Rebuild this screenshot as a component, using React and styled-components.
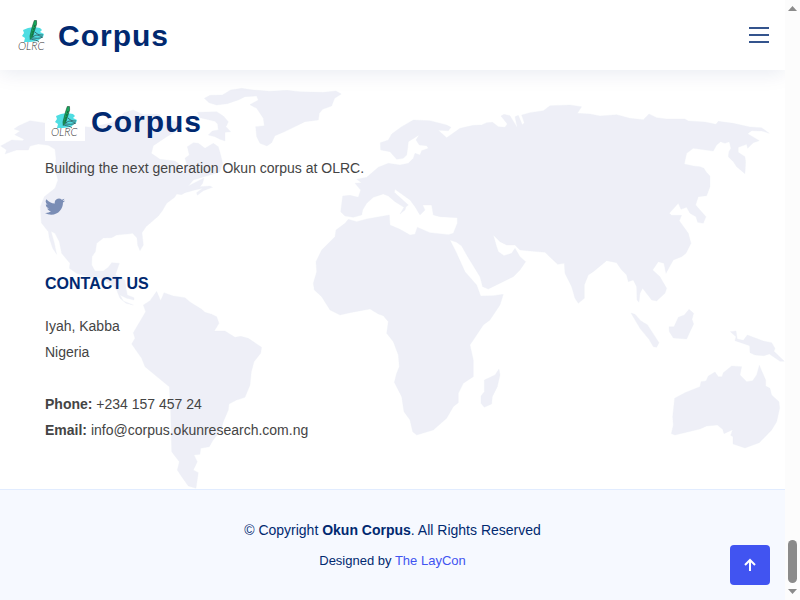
import React from "react";
import styled, { createGlobalStyle } from "styled-components";

const GlobalStyle = createGlobalStyle`
  * { box-sizing: border-box; }
  body {
    margin: 0;
    background: #fff;
    color: #444;
    font-family: "Liberation Sans", Arial, sans-serif;
    font-size: 14px;
  }
`;

const Page = styled.div`
  position: relative;
  display: flex;
  min-height: 100vh;
`;

const Content = styled.div`
  flex: 1;
  min-width: 0;
  display: flex;
  flex-direction: column;
`;

const Header = styled.header`
  position: relative;
  z-index: 1;
  display: flex;
  align-items: center;
  justify-content: space-between;
  padding: 15px 12px;
  background: #fff;
  box-shadow: 0 2px 20px rgba(1, 41, 112, 0.1);
`;

const Brand = styled.a`
  display: flex;
  align-items: center;
  gap: 6px;
  color: #012970;
  text-decoration: none;
`;

const BrandName = styled.span`
  font-size: 30px;
  font-weight: 700;
  line-height: 36px;
  letter-spacing: 1px;
  padding-top: 2px;
`;

const LogoDrawing = styled.svg`
  display: block;
  width: 40px;
  height: 40px;
  background: #fff;
`;

const LogoLetters = styled.text`
  font: italic 300 11px Lato, "Liberation Sans", sans-serif;
  fill: #333;
`;

const MenuButton = styled.button`
  display: flex;
  padding: 0;
  border: 0;
  background: none;
  color: #34548d;
  cursor: pointer;
`;

const FooterTop = styled.section`
  display: grid;
  border-bottom: 1px solid #e1ecff;
`;

const WorldMap = styled.svg`
  grid-area: 1 / 1;
  width: 100%;
  height: 100%;
  fill: #eeeff7;
  stroke: #eeeff7;
  stroke-width: 1px;
  stroke-linejoin: round;
`;

const Details = styled.div`
  grid-area: 1 / 1;
  position: relative;
  display: flex;
  flex-direction: column;
  align-items: flex-start;
  padding: 31px 45px 45px;
`;

const Tagline = styled.p`
  margin: 15px 0 0;
  line-height: 24px;
`;

const SocialLink = styled.a`
  display: flex;
  margin-top: 16px;
  color: #7a8db5;
`;

const Heading = styled.h4`
  margin: 58px 0 19px;
  color: #012970;
  font-size: 16px;
  line-height: 20px;
  text-transform: uppercase;
`;

const Address = styled.address`
  font-style: normal;
  line-height: 26px;
`;

const FooterBottom = styled.footer`
  flex: 1;
  padding: 30px 24px;
  background: #f6f9ff;
  color: #012970;
  text-align: center;
`;

const Copyright = styled.div`
  line-height: 21px;
`;

const Credits = styled.div`
  margin-top: 10px;
  font-size: 13px;
  line-height: 20px;

  a {
    color: #4154f1;
    text-decoration: none;
  }
`;

const BackToTop = styled.a`
  position: fixed;
  right: 30px;
  bottom: 15px;
  display: flex;
  align-items: center;
  justify-content: center;
  width: 40px;
  height: 40px;
  border-radius: 4px;
  background: #4154f1;
  color: #fff;
`;

const ScrollTrack = styled.div`
  position: relative;
  z-index: 2;
  display: flex;
  flex-direction: column;
  align-items: center;
  width: 15px;
  padding: 6px 0 7px;
  background: #fcfcfc;
`;

const ScrollThumb = styled.div`
  width: 9px;
  height: 43px;
  margin: auto 0 6px;
  border-radius: 5px;
  background: #8b8b8b;
`;

const ScrollArrow = styled.svg`
  display: block;
  width: 9px;
  height: 5px;
  fill: #8b8b8b;
`;

function Logo() {
  return (
    <LogoDrawing viewBox="0 0 40 40" aria-hidden="true">
      <path d="M11 15 16 13 22 12 28 13 30 15 28 17 32 19 31 22 28 24 26 26 18 27 12 27 13 23 10 21 12 18Z" fill="#4fdde2" />
      <path d="M23 17c3 3 5 3 8 3M21 22c3-3 5-2 9 0M20 23c4 0 7 1 11-1M19 24c3 1 6 1 8 3" fill="none" stroke="#2d5357" strokeWidth=".8" />
      <path d="M22.3 5.5 24.5 5.5 24.6 9 20.5 22 18.3 24.5 18 21 20.5 11Z" fill="#13a75b" stroke="#17492f" strokeWidth=".6" />
      <path d="M23 10 19.5 22" stroke="#153c27" strokeWidth=".7" strokeDasharray="2 1" />
      <LogoLetters x="6" y="35">OLRC</LogoLetters>
    </LogoDrawing>
  );
}

function CorpusBrand() {
  return (
    <Brand href="#">
      <Logo />
      <BrandName>Corpus</BrandName>
    </Brand>
  );
}

function MapBackground() {
  return (
    <WorldMap viewBox="0 70 785 419" preserveAspectRatio="xMaxYMid meet" aria-hidden="true">
      {/* North America */}
      <g transform="translate(0 80) scale(.3333)">
        <path d="M2 198 35 180 68 182 72 178 44 164 60 153 42 147 55 138 90 122 130 128 170 137 210 135 270 142 330 130 355 120 372 98 400 90 430 104 465 102 482 105 470 120 520 122 545 135 535 150 500 170 460 197 454 220 480 238 525 243 535 250 542 275 555 278 560 250 555 235 568 225 562 200 580 188 595 190 615 205 640 190 655 200 662 225 668 250 660 275 630 285 580 300 565 318 590 305 612 294 608 310 600 320 630 318 638 322 610 332 592 346 590 338 608 325 585 330 555 338 545 344 530 342 524 352 500 370 487 392 475 408 438 440 426 458 430 495 420 512 413 495 411 474 398 460 383 462 370 463 350 465 335 473 310 474 290 490 286 515 276 530 275 555 285 573 310 573 325 562 335 548 358 550 353 565 346 585 375 600 378 625 382 645 402 653 402 660 380 655 360 645 370 663 400 675 378 670 360 655 350 630 330 610 300 595 270 592 230 580 208 565 210 550 185 520 178 485 165 460 153 454 162 485 170 523 158 505 148 475 145 455 124 428 121 380 133 350 165 325 174 300 166 270 168 235 165 208 145 196 115 192 90 198 85 210 50 210 15 222 20 210Z" />
        <path d="M592 97 650 95 670 108 685 125 678 140 692 155 675 157 675 183 660 178 645 170 625 165 637 153 655 150 653 132 645 124 600 113Z" />
      </g>
      {/* Greenland and the Arctic islands */}
      <g transform="translate(140 80) scale(.3333)">
        <path d="M193 55 210 46 247 45 272 30 305 25 340 30 390 34 440 31 480 35 550 37 588 33 604 42 584 55 575 78 548 88 538 100 535 120 495 125 430 157 405 167 395 188 381 198 360 190 350 170 347 140 373 137 370 115 350 85 330 74 355 60 350 48 315 50 295 60 262 71 230 75 207 68Z" />
      </g>
      {/* South America */}
      <g transform="translate(110 270) scale(.3333)">
        <path d="M140 64 152 92 162 68 190 78 225 83 240 96 275 118 285 127 305 133 320 140 327 160 313 183 345 183 375 202 392 199 415 205 455 232 452 250 432 275 424 305 420 345 405 382 380 390 357 402 355 420 340 455 333 480 308 512 298 530 272 535 270 553 252 555 262 575 250 600 265 608 258 655 235 648 215 620 202 600 208 575 185 545 182 420 178 350 165 340 105 290 95 265 65 222 75 205 70 188 107 125 100 105 120 92Z" />
      </g>
      {/* Europe, Asia, Africa and Madagascar */}
      <g transform="translate(300 90) scale(.3333)">
        <path d="M241 158 265 150 275 132 305 110 340 90 390 92 440 105 453 112 445 122 415 121 440 143 480 115 520 106 545 105 560 98 578 97 595 110 615 112 622 102 603 78 612 73 630 77 652 113 645 80 655 76 667 104 673 98 665 75 690 68 730 62 750 47 810 45 845 50 832 70 870 72 900 78 950 74 990 85 1030 89 1047 72 1070 83 1100 87 1155 87 1165 93 1215 96 1248 103 1255 94 1300 100 1350 111 1385 113 1408 130 1385 123 1355 122 1343 131 1378 152 1360 158 1343 175 1340 163 1315 172 1315 187 1335 200 1337 215 1335 251 1310 230 1300 215 1285 200 1287 185 1293 175 1288 155 1275 160 1262 155 1250 165 1240 183 1180 175 1160 190 1153 222 1180 228 1200 230 1212 235 1218 245 1230 258 1230 290 1220 317 1195 320 1187 345 1218 380 1210 400 1193 397 1188 380 1170 370 1160 352 1143 358 1135 340 1108 370 1115 376 1145 376 1138 392 1165 430 1173 460 1158 490 1145 500 1120 510 1098 550 1092 520 1075 515 1058 540 1080 560 1100 595 1095 610 1070 633 1055 630 1028 595 1020 610 1017 637 1011 630 1010 590 1000 570 985 575 980 555 965 540 950 518 920 512 880 545 865 555 853 585 853 625 835 640 825 625 815 590 795 550 793 520 773 523 735 487 690 483 660 480 645 465 620 465 600 455 580 435 590 470 595 485 612 497 635 490 645 475 660 500 677 515 660 540 640 560 600 580 565 597 548 590 540 560 500 495 485 468 470 457 450 450 470 490 495 545 530 585 542 618 580 617 610 613 600 645 570 690 550 705 510 765 520 810 520 860 490 880 475 910 475 938 460 950 440 985 400 1020 350 1035 338 1025 330 990 312 965 305 920 283 877 290 850 298 830 295 795 280 755 260 730 265 695 250 677 235 672 210 657 150 668 120 675 90 660 65 620 43 600 40 580 50 545 48 515 65 480 105 440 108 420 135 400 145 388 170 395 200 387 268 375 270 405 300 418 330 435 345 433 352 412 390 428 445 434 460 430 472 400 472 383 420 380 400 375 395 345 368 345 375 360 360 375 345 350 330 330 285 298 283 307 325 345 318 350 315 360 300 372 312 352 285 335 265 318 250 312 220 322 200 340 188 360 185 375 160 382 135 378 122 365 128 318 150 316 175 322 182 300 165 280 185 278 170 268 200 262 235 232 265 220 300 225 325 220 340 205 345 190 360 195 365 182 385 175 380 167 358 165 348 150 357 135 325 155 323 175 320 195 310 205 290 208 270 185 242 180Z" />
        <path d="M597 837 600 855 592 890 577 920 575 942 553 952 543 940 543 918 553 905 553 870 585 855Z" />
      </g>
      {/* Indonesia, New Guinea and Australia */}
      <g transform="translate(600 280) scale(.3333)">
        <path d="M93 99 105 103 122 122 142 134 177 188 170 202 160 200 147 178 120 145Z" />
        <path d="M207 140 222 140 235 112 253 105 267 88 281 100 276 118 281 132 270 155 260 177 220 174 208 155Z" />
        <path d="M391 155 408 153 412 177 430 181 442 165 490 183 515 188 525 205 522 214 553 244 540 244 508 222 492 227 465 225 450 218 449 197 405 182 408 170Z" />
        <path d="M478 256 497 300 497 318 510 325 515 345 537 365 539 385 530 425 515 450 478 488 435 504 415 497 399 492 399 470 392 466 398 449 372 461 368 448 352 435 320 438 300 447 225 465 214 461 220 435 218 410 224 355 255 338 300 320 303 305 318 303 325 288 345 276 355 290 366 290 370 278 395 258 425 260 420 285 440 305 458 302 470 285Z" />
      </g>
    </WorldMap>
  );
}

export default function App() {
  return (
    <Page>
      <GlobalStyle />
      <Content>
        <Header>
          <CorpusBrand />
          <MenuButton aria-label="Open menu">
            <svg width="28" height="28" viewBox="0 0 28 28" aria-hidden="true">
              <path d="M4 7h20M4 14h20M4 21h20" stroke="currentColor" strokeWidth="2" />
            </svg>
          </MenuButton>
        </Header>
        <FooterTop>
          <MapBackground />
          <Details>
            <CorpusBrand />
            <Tagline>Building the next generation Okun corpus at OLRC.</Tagline>
            <SocialLink href="#" aria-label="Twitter">
              <svg width="20" height="20" viewBox="0 0 16 16" fill="currentColor" aria-hidden="true">
                <path d="M5.026 15c6.038 0 9.341-5.003 9.341-9.334 0-.14 0-.282-.006-.422A6.685 6.685 0 0 0 16 3.542a6.658 6.658 0 0 1-1.889.518 3.301 3.301 0 0 0 1.447-1.817 6.533 6.533 0 0 1-2.087.793A3.286 3.286 0 0 0 7.875 6.03a9.325 9.325 0 0 1-6.767-3.429 3.289 3.289 0 0 0 1.018 4.382A3.323 3.323 0 0 1 .64 6.575v.045a3.288 3.288 0 0 0 2.632 3.218 3.203 3.203 0 0 1-.865.115 3.23 3.23 0 0 1-.614-.057 3.283 3.283 0 0 0 3.067 2.277A6.588 6.588 0 0 1 .78 13.58a6.32 6.32 0 0 1-.78-.045A9.344 9.344 0 0 0 5.026 15z" />
              </svg>
            </SocialLink>
            <Heading>Contact Us</Heading>
            <Address>
              Iyah, Kabba
              <br />
              Nigeria
              <br />
              <br />
              <strong>Phone:</strong> +234 157 457 24
              <br />
              <strong>Email:</strong> info@corpus.okunresearch.com.ng
            </Address>
          </Details>
        </FooterTop>
        <FooterBottom>
          <Copyright>
            © Copyright <strong>Okun Corpus</strong>. All Rights Reserved
          </Copyright>
          <Credits>
            Designed by <a href="#">The LayCon</a>
          </Credits>
        </FooterBottom>
      </Content>
      <ScrollTrack aria-hidden="true">
        <ScrollArrow viewBox="0 0 9 5">
          <path d="M4.5 0 9 5H0Z" />
        </ScrollArrow>
        <ScrollThumb />
        <ScrollArrow viewBox="0 0 9 5">
          <path d="M0 0H9L4.5 5Z" />
        </ScrollArrow>
      </ScrollTrack>
      <BackToTop href="#" aria-label="Back to top">
        <svg width="24" height="24" viewBox="0 0 24 24" fill="none" stroke="currentColor" strokeWidth="2" aria-hidden="true">
          <path d="M12 18V7M7 12l5-5 5 5" />
        </svg>
      </BackToTop>
    </Page>
  );
}
